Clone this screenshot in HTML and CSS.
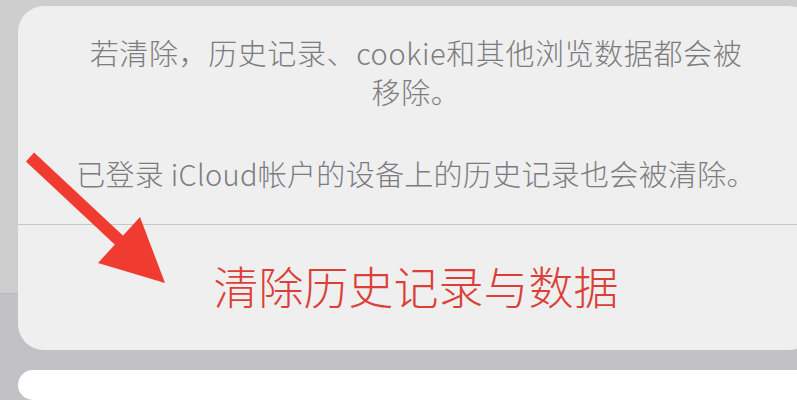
FILE: index.html
```html
<!DOCTYPE html>
<html lang="zh-CN">
<head>
<meta charset="utf-8">
<title>清除历史记录与数据</title>
<link rel="stylesheet" href="styles.css">
</head>
<body>
<div class="page">
  <section class="sheet">
    <div class="message">
      <p>若清除，历史记录、cookie和其他浏览数据都会被<br>移除。</p>
      <p>已登录 iCloud帐户的设备上的历史记录也会被清除。</p>
    </div>
    <div class="divider"></div>
    <button class="action">清除历史记录与数据</button>
  </section>
  <section class="cancel"></section>
</div>
<svg class="arrow" width="200" height="300" viewBox="0 0 200 300" aria-hidden="true">
  <line x1="30" y1="157" x2="122" y2="243" stroke="#f03c30" stroke-width="12" stroke-linecap="butt"/>
  <polygon points="140,217 98,263 165,283" fill="#f03c30"/>
</svg>
</body>
</html>
```
FILE: styles.css
```css
html, body {
  margin: 0;
  padding: 0;
}
body {
  width: 797px;
  height: 400px;
  overflow: hidden;
  position: relative;
  background: linear-gradient(to bottom, #cececf 0, #cececf 293px, #b9b9bc 293px, #b9b9bc 294px, #c2c2c6 294px);
  font-family: "Noto Sans CJK SC", "Noto Sans", sans-serif;
}
.page {
  padding: 6px 0 0 18px;
  display: flex;
  flex-direction: column;
  gap: 20px;
  width: 796px;
}
.sheet {
  background: #efeff0;
  border-radius: 26px;
  height: 344px;
  flex: none;
  display: flex;
  flex-direction: column;
}
.message {
  padding: 27px 20px 0;
  height: 191px;
  text-align: center;
  color: #7c7c7e;
  font-size: 29px;
  font-weight: 300;
  line-height: 39px;
  white-space: nowrap;
}
.message p {
  margin: 0 0 43px;
}
.message p:first-child {
  letter-spacing: 0.6px;
}
.message p:last-child {
  letter-spacing: 0.3px;
}
.divider {
  height: 1px;
  background: #c6c6c8;
}
.action {
  flex: 1;
  border: none;
  background: transparent;
  color: #db3f37;
  font-family: "Noto Sans CJK SC", sans-serif;
  font-size: 45px;
  font-weight: 300;
  line-height: 1;
  padding: 0 0 4px;
  cursor: pointer;
}
.cancel {
  background: #ffffff;
  border-radius: 26px;
  height: 30px;
  flex: none;
}
.arrow {
  position: absolute;
  left: 0;
  top: 0;
}
```
